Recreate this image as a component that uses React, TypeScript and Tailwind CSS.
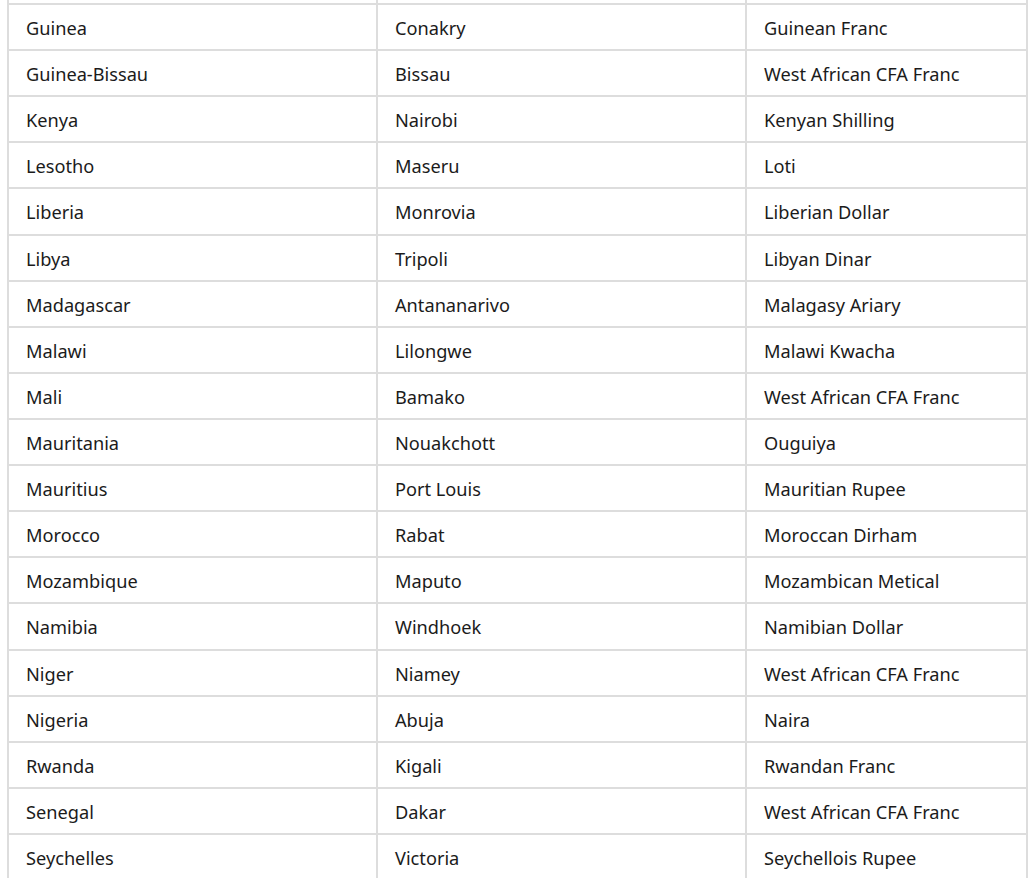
const rows: [string, string, string][] = [
  ["Guinea", "Conakry", "Guinean Franc"],
  ["Guinea-Bissau", "Bissau", "West African CFA Franc"],
  ["Kenya", "Nairobi", "Kenyan Shilling"],
  ["Lesotho", "Maseru", "Loti"],
  ["Liberia", "Monrovia", "Liberian Dollar"],
  ["Libya", "Tripoli", "Libyan Dinar"],
  ["Madagascar", "Antananarivo", "Malagasy Ariary"],
  ["Malawi", "Lilongwe", "Malawi Kwacha"],
  ["Mali", "Bamako", "West African CFA Franc"],
  ["Mauritania", "Nouakchott", "Ouguiya"],
  ["Mauritius", "Port Louis", "Mauritian Rupee"],
  ["Morocco", "Rabat", "Moroccan Dirham"],
  ["Mozambique", "Maputo", "Mozambican Metical"],
  ["Namibia", "Windhoek", "Namibian Dollar"],
  ["Niger", "Niamey", "West African CFA Franc"],
  ["Nigeria", "Abuja", "Naira"],
  ["Rwanda", "Kigali", "Rwandan Franc"],
  ["Senegal", "Dakar", "West African CFA Franc"],
  ["Seychelles", "Victoria", "Seychellois Rupee"],
];

export default function App() {
  return (
    <div className="h-[878px] overflow-hidden bg-white pl-[7px] pr-[7px]" style={{ fontFamily: '"Noto Sans", "Open Sans", sans-serif' }}>
      <table className="w-[1021px] table-fixed border-collapse text-[18.2px] text-[#1b1b1b]">
        <colgroup>
          <col className="w-[369px]" />
          <col className="w-[369px]" />
          <col />
        </colgroup>
        <tbody>
          {/* tail of the previous row, scrolled off the top */}
          <tr className="h-[4px]">
            <td className="border-2 border-t-0 border-[#dddddd] p-0" />
            <td className="border-2 border-t-0 border-[#dddddd] p-0" />
            <td className="border-2 border-t-0 border-[#dddddd] p-0" />
          </tr>
          {rows.map(([country, capital, currency]) => (
            <tr key={country} className="h-[46.12px]">
              {[country, capital, currency].map((cell, i) => (
                <td key={i} className="border-2 border-[#dddddd] pl-[17px] pr-2 pt-[2px] align-middle leading-[24px]">
                  {cell}
                </td>
              ))}
            </tr>
          ))}
        </tbody>
      </table>
    </div>
  );
}
